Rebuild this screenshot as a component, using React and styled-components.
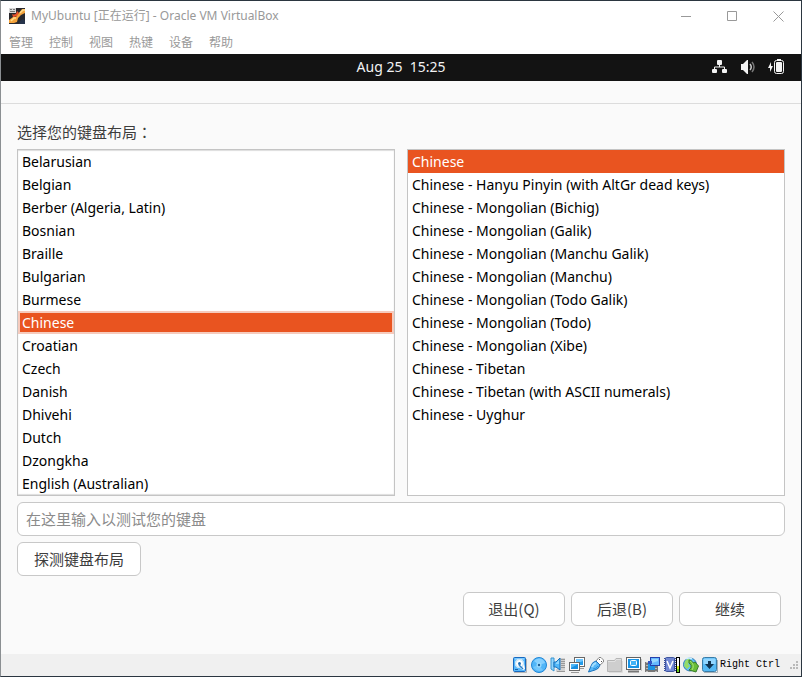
import React, { useState } from "react";
import styled, { createGlobalStyle, css } from "styled-components";

const uiFont = `"Noto Sans", "Noto Sans CJK SC", sans-serif`;

const GlobalStyle = createGlobalStyle`
  *, *::before, *::after { box-sizing: border-box; }
  body { margin: 0; }
  button, input { font: inherit; }
`;

const Window = styled.div`
  display: flex;
  flex-direction: column;
  min-height: 100vh;
  border: 1px solid #2b3640;
  border-left-color: #8b8f92;
  background: #fafafa;
  color: #3d3d3d;
  font: 14px/22px ${uiFont};
`;

const TitleBar = styled.header`
  display: flex;
  align-items: center;
  height: 30px;
  padding-left: 8px;
  gap: 6px;
  background: #fff;
  color: #999;
  font: 12px/16px "Noto Sans", "Noto Sans CJK SC", sans-serif;
`;

const Title = styled.h1`
  flex: 1;
  margin: 0;
  font: inherit;
  white-space: nowrap;
`;

const CaptionButtons = styled.div`
  display: flex;
  flex: none;
`;

const CaptionButton = styled.button`
  display: grid;
  place-items: center;
  width: 46px;
  height: 30px;
  padding: 0;
  border: 0;
  background: none;
  color: #999;
`;

const MenuBar = styled.nav`
  display: flex;
  align-items: center;
  gap: 16px;
  height: 23px;
  padding: 0 0 2px 8px;
  background: #fff;
`;

const MenuButton = styled.button`
  padding: 0;
  border: 0;
  background: none;
  color: #999;
  font: 12px/16px "Noto Sans CJK SC", sans-serif;
`;

const SystemBar = styled.div`
  display: grid;
  grid-template-columns: 1fr auto 1fr;
  align-items: center;
  height: 27px;
  padding: 0 17px 2px;
  background: #131313;
  color: #f2f2f2;
`;

const Clock = styled.time`
  grid-column: 2;
  white-space: pre;
`;

const Indicators = styled.div`
  display: flex;
  justify-content: flex-end;
  gap: 12px;
`;

const HeaderStrip = styled.div`
  height: 23px;
  border-bottom: 1px solid #dcdcdc;
`;

const Main = styled.main`
  display: flex;
  flex: 1;
  flex-direction: column;
  gap: 6px;
  padding: 17px 16px 28px;
`;

const Prompt = styled.h2`
  margin: 0;
  font: 15px/22px "Noto Sans CJK SC", sans-serif;
`;

const CenteredColon = styled.span`
  font-family: "Noto Sans CJK TC", sans-serif;
`;

const Lists = styled.div`
  display: grid;
  grid-template-columns: 1fr 1fr;
  gap: 12px;
`;

const ListBox = styled.ul`
  margin: 0;
  padding: 0;
  overflow: hidden;
  border: 1px solid #c4c4c4;
  background: #fff;
  color: #000;
  list-style: none;
  ${(p) => p.$inset && css`box-shadow: inset 0 1px 1px #ddd, inset 0 -1px 1px #ddd;`}
`;

const Option = styled.li`
  height: 23px;
  padding-left: 4px;
  line-height: 23px;
  white-space: nowrap;
  cursor: default;
  ${(p) =>
    p.$selected &&
    css`
      background: #e95420;
      color: #fff;
    `}
  ${(p) =>
    p.$selected &&
    p.$focused &&
    css`
      box-shadow: inset 0 0 0 2px #f6cbbd;
    `}
`;

const TestInput = styled.input`
  width: 100%;
  height: 34px;
  padding: 0 8px 2px;
  border: 1px solid #c8c8c8;
  border-radius: 6px;
  background: #fff;
  color: #3d3d3d;
  font: 15px/22px "Noto Sans CJK SC", sans-serif;
  &::placeholder {
    color: #8b8b8b;
    opacity: 1;
  }
`;

const PushButton = styled.button`
  min-width: 102px;
  height: 34px;
  padding: 0 16px;
  border: 1px solid #c8c8c8;
  border-radius: 6px;
  background: #fff;
  color: #3d3d3d;
  font: 15px/22px "Noto Sans CJK SC", sans-serif;
  white-space: nowrap;
`;

const DetectRow = styled.div`
  display: flex;
`;

const Actions = styled.div`
  display: flex;
  justify-content: flex-end;
  gap: 6px;
  padding: 10px 4px 0 0;
`;

const StatusBar = styled.footer`
  display: flex;
  align-items: center;
  justify-content: flex-end;
  gap: 2px;
  height: 22px;
  padding-right: 2px;
  background: #f0f0f0;
  color: #000;
`;

const DeviceIcons = styled.div`
  display: flex;
  gap: 3px;
`;

const HostKey = styled.span`
  margin-right: 7px;
  font: 10px/16px "Liberation Mono", monospace;
`;

const Glyph = styled.svg`
  display: block;
  flex: none;
`;

const Icon = ({ size = 16, children }) => (
  <Glyph width={size} height={size} viewBox={`0 0 ${size} ${size}`} fill="none" aria-hidden="true">
    {children}
  </Glyph>
);

const UbuntuIcon = () => (
  <Icon>
    <rect width="16" height="16" fill="#29292e" />
    <path d="M3 6Q7 8 8 3L10 5Q9 9 4 9Z" fill="#e8502a" />
    <path d="M10 5L13 1H16V5L12 7L9 10L8 14L5 15H0V12L4 9H7Z" fill="#f5a33b" />
    <path d="M11 5L14 2H16M2 13L5 10H7" stroke="#ffdc8c" strokeWidth="1.5" />
    <path d="M10 16L11 13L14 11L16 13V16Z" fill="#26344b" />
    <path d="M0 0H7V5H0Z" fill="#d8d8d8" />
    <path d="M1 1.500H3M4 1.500H6M1 3.500H6" stroke="#777" />
  </Icon>
);

const NetworkIcon = () => (
  <Icon>
    <path d="M7.500 5V8M2.500 11V8H12.500V11" stroke="#f4f4f4" />
    <rect x="5" y="1" width="5" height="5" rx="1" fill="#f4f4f4" />
    <rect x="0" y="10" width="5" height="4" rx="1" fill="#f4f4f4" />
    <rect x="10" y="10" width="5" height="4" rx="1" fill="#f4f4f4" />
  </Icon>
);

const VolumeIcon = () => (
  <Icon>
    <path d="M1 5H3L7 1H8V15H7L3 11H1Z" fill="#f4f4f4" />
    <path d="M10 5Q12.500 8 10 11" stroke="#c8c8c8" strokeWidth="1.500" />
    <path d="M12 3Q16 8 12 13" stroke="#777" strokeWidth="1.500" />
  </Icon>
);

const BatteryIcon = () => (
  <Icon>
    <path d="M3 3L0 9H2V13L5 7H3Z" fill="#f4f4f4" />
    <rect x="6.500" y="1.500" width="9" height="13" rx="2" stroke="#f4f4f4" />
    <path d="M9 0H13V2H9Z" fill="#f4f4f4" />
    <rect x="8" y="3" width="6" height="10" rx="1" fill="#f4f4f4" />
  </Icon>
);

const DiskIcon = () => (
  <Icon>
    <path d="M2 15.500H14.500V2" stroke="#b5b5b5" />
    <rect x="1.500" y="0.500" width="12" height="14" rx="1" fill="#58b8fb" stroke="#1769c0" />
    <path d="M3 2H12" stroke="#a8dcff" />
    <path d="M7.500 2Q12 2 12 7L13 12L11 13L8 11Q3 11 3 6.500Q3 2 7.500 2Z" fill="#fff" />
    <circle cx="7.500" cy="6.500" r="4" stroke="#b9dcf4" />
    <circle cx="7.500" cy="6.500" r="1.500" fill="#1e6fb7" />
    <path d="M7 8L11 12" stroke="#2c82c9" strokeWidth="1.500" />
    <path d="M3 12.500H6" stroke="#1763ad" />
  </Icon>
);

const DiscIcon = () => (
  <Icon>
    <circle cx="8" cy="8" r="7.500" fill="#52b6f8" stroke="#2085d6" />
    <path d="M8 1.500A6.500 6.500 0 0 1 14 6L8 8L3 4A6.500 6.500 0 0 1 8 1.500Z" fill="#86d0ff" />
    <path d="M2 10L8 8L12 13Q7 16 2 10Z" fill="#73c7fc" />
    <circle cx="8" cy="8" r="2.500" fill="#9bdcff" />
    <circle cx="8" cy="8" r="1.200" fill="#1d5e97" />
  </Icon>
);

const AudioIcon = () => (
  <Icon>
    <path d="M10 1H15V15H6V12H10Z" fill="#d2d2d2" />
    <path d="M11 2.500H15M11 4.500H15M11 6.500H15M11 8.500H15M11 10.500H15M7 14.500H15" stroke="#999" />
    <path d="M1 1H4V14L1 12Z" fill="#93d6ff" stroke="#3794d1" />
    <path d="M4 5H6L10 1V13L6 10H4Z" fill="#52b8f8" stroke="#176fb9" />
    <path d="M6 6L9 3V7H6Z" fill="#91d7ff" />
  </Icon>
);

const MonitorsIcon = () => (
  <Icon>
    <rect x="5.500" y="0.500" width="10" height="9" fill="#fff" stroke="#686868" />
    <rect x="7" y="2" width="7" height="6" fill="#229bea" />
    <path d="M7 2H14V4L7 7Z" fill="#68c4ff" />
    <path d="M8 11.500H15" stroke="#999" />
    <rect x="0.500" y="5.500" width="10" height="8" fill="#fff" stroke="#686868" />
    <rect x="2" y="7" width="7" height="5" fill="#188fe2" />
    <path d="M2 7H9L2 11Z" fill="#4fb7f8" />
    <path d="M2 15.500H10" stroke="#999" />
  </Icon>
);

const UsbIcon = () => (
  <Icon>
    <path d="M8 4L11 0.500H13L15.500 3V5L12 8Z" fill="#fff" stroke="#888" />
    <path d="M11 2.500H12M13 4.500H14" stroke="#555" />
    <path d="M0.500 15L3 9Q4 5 8 4L12 8Q11 12 7 13Z" fill="#58b8f8" stroke="#1b72bb" />
    <path d="M4 10Q5 7 8 6" stroke="#a4dfff" strokeWidth="2" />
    <path d="M5 12Q8 12 10 9" stroke="#2b91dc" />
  </Icon>
);

const FolderIcon = () => (
  <Icon>
    <path d="M0.500 3.500H7.500L9 1.500H14.500V14.500H0.500Z" fill="#cecece" stroke="#b5b5b5" />
    <path d="M1 4.500H8L9 2.500H14" stroke="#e1e1e1" />
    <path d="M2 15.500H15.500V4" stroke="#dcdcdc" />
  </Icon>
);

const DisplayIcon = () => (
  <Icon>
    <rect x="0.500" y="0.500" width="14" height="12" fill="#fff" stroke="#626262" />
    <rect x="2" y="2" width="11" height="9" fill="#1793e5" />
    <rect x="4.500" y="3.500" width="6" height="5" rx="1" fill="#41b3f7" stroke="#fff" />
    <path d="M2 14.500H13" stroke="#777" strokeWidth="2" />
    <path d="M15.500 2V14" stroke="#c5c5c5" />
  </Icon>
);

const CaptureIcon = () => (
  <Icon>
    <path d="M0 5H13V15H0Z" fill="#777" />
    <path d="M2 5V15M11 5V15" stroke="#fff" strokeDasharray="1 2" />
    <rect x="3" y="7" width="7" height="6" fill="#1b91e2" />
    <rect x="5.500" y="0.500" width="9" height="8" fill="#65b8ff" stroke="#2440ad" />
    <path d="M7 2H13V4L7 6Z" fill="#9ad7ff" />
    <path d="M3 4H7V7H3Z" fill="#3155c5" />
  </Icon>
);

const ChipIcon = () => (
  <Icon>
    <path d="M1 1V15M11 1V15" stroke="#334b9e" strokeDasharray="1 1" strokeWidth="2" />
    <rect x="1.500" y="0.500" width="9" height="14" rx="1" fill="#7288d4" stroke="#40569f" />
    <path d="M3 4L6 11L9 4" stroke="#fff" strokeWidth="1.500" />
    <rect x="12" y="0" width="4" height="16" fill="#000" />
    <rect x="13" y="1" width="2" height="8" fill="#fff" />
    <rect x="13" y="9" width="2" height="3" fill="#d6ef28" />
    <rect x="13" y="12" width="2" height="3" fill="#69cc22" />
  </Icon>
);

const MouseIcon = () => (
  <Icon>
    <circle cx="7" cy="7.500" r="6.500" fill="#5ebdf3" stroke="#317bb5" />
    <path d="M2 4L6 1L7 4L5 7L7 9L4 12L1 9Z" fill="#94db67" />
    <path d="M6 3Q9 3 10 6L12 5L15.500 9L13 15L6 13L8 11Q9 8 6 6Z" fill="#68bd38" stroke="#387b2c" />
    <path d="M7 4Q11 6 10 11L9 13" stroke="#aae678" />
    <path d="M3 2Q6 0 9 2" stroke="#d1f1ff" strokeWidth="1.500" />
  </Icon>
);

const HostArrowIcon = () => (
  <Icon>
    <rect x="0.500" y="0.500" width="14" height="14" rx="2" fill="#55b9f4" stroke="#387ca8" />
    <path d="M1.500 7V2.500Q2 1.500 3 1.500H12.500L13.500 2.500V7Z" fill="#91d6ff" />
    <path d="M6 4H9V7H12L7.500 12L3 7H6Z" fill="#103452" />
    <path d="M2 15.500H15.500V3" stroke="#a7b1b8" />
  </Icon>
);

const GripIcon = () => (
  <Icon size={10}>
    <path d="M7 1H9V3H7ZM4 4H6V6H4ZM7 4H9V6H7ZM1 7H3V9H1ZM4 7H6V9H4ZM7 7H9V9H7Z" fill="#b9b9b9" />
  </Icon>
);

const MinimizeIcon = () => (
  <Icon size={11}>
    <path d="M0 5.500H10" stroke="currentColor" />
  </Icon>
);

const MaximizeIcon = () => (
  <Icon size={11}>
    <path d="M0.500 0.500H9.500V9.500H0.500Z" stroke="currentColor" />
  </Icon>
);

const CloseIcon = () => (
  <Icon size={11}>
    <path d="M0.500 0.500L10.500 10.500M10.500 0.500L0.500 10.500" stroke="currentColor" />
  </Icon>
);

const menus = ["管理", "控制", "视图", "热键", "设备", "帮助"];
const layouts = [
  "Belarusian", "Belgian", "Berber (Algeria, Latin)", "Bosnian", "Braille",
  "Bulgarian", "Burmese", "Chinese", "Croatian", "Czech", "Danish", "Dhivehi",
  "Dutch", "Dzongkha", "English (Australian)",
];
const variants = [
  "Chinese",
  "Chinese - Hanyu Pinyin (with AltGr dead keys)",
  "Chinese - Mongolian (Bichig)",
  "Chinese - Mongolian (Galik)",
  "Chinese - Mongolian (Manchu Galik)",
  "Chinese - Mongolian (Manchu)",
  "Chinese - Mongolian (Todo Galik)",
  "Chinese - Mongolian (Todo)",
  "Chinese - Mongolian (Xibe)",
  "Chinese - Tibetan",
  "Chinese - Tibetan (with ASCII numerals)",
  "Chinese - Uyghur",
];
const deviceIcons = [
  DiskIcon, DiscIcon, AudioIcon, MonitorsIcon, UsbIcon, FolderIcon,
  DisplayIcon, CaptureIcon, ChipIcon, MouseIcon, HostArrowIcon,
];

function SelectionList({ label, items, focused }) {
  const [selected, setSelected] = useState("Chinese");
  return (
    <ListBox role="listbox" aria-label={label} tabIndex={0} $inset={focused}>
      {items.map((item) => (
        <Option
          key={item}
          role="option"
          aria-selected={item === selected}
          $selected={item === selected}
          $focused={focused}
          onClick={() => setSelected(item)}
        >
          {item}
        </Option>
      ))}
    </ListBox>
  );
}

export default function App() {
  return (
    <>
      <GlobalStyle />
      <Window>
        <TitleBar>
          <UbuntuIcon />
          <Title>MyUbuntu [正在运行] - Oracle VM VirtualBox</Title>
          <CaptionButtons>
            <CaptionButton aria-label="最小化"><MinimizeIcon /></CaptionButton>
            <CaptionButton aria-label="最大化"><MaximizeIcon /></CaptionButton>
            <CaptionButton aria-label="关闭"><CloseIcon /></CaptionButton>
          </CaptionButtons>
        </TitleBar>
        <MenuBar>
          {menus.map((name) => <MenuButton key={name}>{name}</MenuButton>)}
        </MenuBar>
        <SystemBar>
          <Clock>{"Aug 25  15:25"}</Clock>
          <Indicators><NetworkIcon /><VolumeIcon /><BatteryIcon /></Indicators>
        </SystemBar>
        <HeaderStrip />
        <Main>
          <Prompt>选择您的键盘布局<CenteredColon lang="zh-TW">：</CenteredColon></Prompt>
          <Lists>
            <SelectionList label="键盘布局" items={layouts} focused />
            <SelectionList label="布局变体" items={variants} />
          </Lists>
          <TestInput aria-label="测试键盘" placeholder="在这里输入以测试您的键盘" />
          <DetectRow><PushButton>探测键盘布局</PushButton></DetectRow>
          <Actions>
            <PushButton>退出(Q)</PushButton>
            <PushButton>后退(B)</PushButton>
            <PushButton>继续</PushButton>
          </Actions>
        </Main>
        <StatusBar>
          <DeviceIcons>
            {deviceIcons.map((Device, index) => <Device key={index} />)}
          </DeviceIcons>
          <HostKey>Right Ctrl</HostKey>
          <GripIcon />
        </StatusBar>
      </Window>
    </>
  );
}
